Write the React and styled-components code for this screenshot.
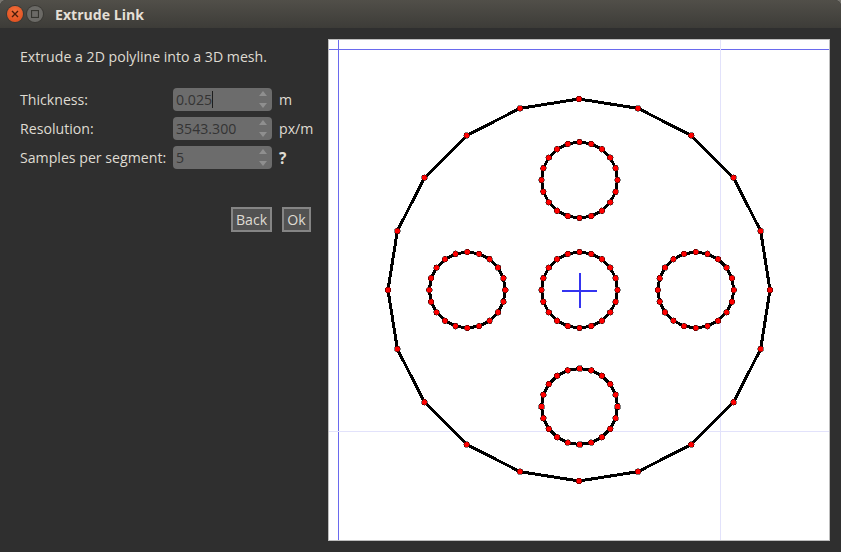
import React from "react";
import styled, { createGlobalStyle } from "styled-components";

const GlobalStyle = createGlobalStyle`
  html, body {
    margin: 0;
    padding: 0;
    background: #77756f;
  }
`;

const Window = styled.div`
  width: 841px;
  height: 552px;
  display: flex;
  flex-direction: column;
  overflow: hidden;
  border-radius: 6px 6px 0 0;
  background: #2f2f2f;
  font-family: "Open Sans", "Noto Sans", sans-serif;
  font-size: 14.15px;
  color: #dfdbd2;
`;

const TitleBar = styled.div`
  height: 28px;
  flex: none;
  display: flex;
  align-items: center;
  gap: 4px;
  padding-left: 7px;
  background: linear-gradient(#514f49, #3d3c38);
`;

const WinButton = styled.div`
  width: 16px;
  height: 16px;
  border-radius: 50%;
  display: flex;
  align-items: center;
  justify-content: center;
  background: ${(p) => (p.$close ? "radial-gradient(circle at 50% 35%, #f2703c, #dc4a1a)" : "#6b6a66")};
  box-shadow: 0 0 0 1px #3a3935;
`;

const Title = styled.div`
  margin-left: 8px;
  font-size: 14.1px;
  font-weight: 700;
  color: #e4dfd6;
`;

const Body = styled.div`
  flex: 1;
  display: flex;
  align-items: flex-start;
  padding-top: 11px;
`;

const Side = styled.div`
  width: 291px;
  margin-left: 20px;
  margin-right: 17px;
  flex: none;
`;

const Intro = styled.div`
  height: 38px;
  line-height: 36px;
  margin-bottom: 11px;
  white-space: nowrap;
`;

const Form = styled.div`
  display: grid;
  grid-template-columns: 153px 99px auto;
  grid-auto-rows: 23px;
  row-gap: 6px;
  align-items: center;
`;

const Label = styled.div`
  white-space: nowrap;
`;

const Spin = styled.div`
  height: 23px;
  border-radius: 4px;
  background: #6c6c6c;
  display: flex;
  align-items: center;
  justify-content: space-between;
  padding: 0 3px;
  color: #343434;
`;

const Value = styled.div`
  display: flex;
  align-items: center;
`;

const Caret = styled.span`
  width: 1px;
  height: 17px;
  background: #1e1e1e;
`;

const Unit = styled.div`
  margin-left: 7px;
  white-space: nowrap;
  font-weight: ${(p) => (p.$strong ? 700 : 400)};
  font-size: ${(p) => (p.$strong ? "15.5px" : "inherit")};
`;

const Actions = styled.div`
  display: flex;
  justify-content: flex-end;
  gap: 10px;
  margin-top: 38px;
`;

const Button = styled.button`
  height: 25px;
  padding: 0;
  width: ${(p) => p.$w}px;
  box-sizing: border-box;
  border: 2px solid #858585;
  border-radius: 0;
  background: #525252;
  color: #dfdbd2;
  font: inherit;
`;

const Canvas = styled.svg`
  width: 500px;
  height: 500px;
  flex: none;
  display: block;
  border: 1px solid #bdbdbd;
  background: #fff;
`;

const ring = (cx, cy, r) =>
  Array.from({ length: 20 }, (_, i) => {
    const a = (i * Math.PI) / 10;
    return [cx + r * Math.sin(a), cy - r * Math.cos(a)];
  });

const rings = [
  ring(579, 290, 191),
  ring(579.5, 180, 38),
  ring(579.5, 290, 38),
  ring(579.5, 406.5, 38),
  ring(467.3, 290, 38),
  ring(695.8, 290, 38),
];

const Arrows = () => (
  <svg width="12" height="19" viewBox="0 0 12 19">
    <path d="M6 1 L10 6 H2 Z" fill="#8f8f8f" />
    <path d="M2 13 H10 L6 18 Z" fill="#8f8f8f" />
  </svg>
);

const fields = [
  { label: "Thickness:", value: "0.025", unit: "m", caret: true },
  { label: "Resolution:", value: "3543.300", unit: "px/m" },
  { label: "Samples per segment:", value: "5", unit: "?", strong: true },
];

export default function App() {
  return (
    <>
      <GlobalStyle />
      <Window>
        <TitleBar>
          <WinButton $close>
            <svg width="8" height="8" viewBox="0 0 8 8">
              <path d="M1 1 L7 7 M7 1 L1 7" stroke="#4a1c0a" strokeWidth="1.4" />
            </svg>
          </WinButton>
          <WinButton>
            <svg width="8" height="8" viewBox="0 0 8 8">
              <rect x="0.5" y="0.5" width="7" height="7" fill="none" stroke="#35352f" strokeWidth="1.2" />
            </svg>
          </WinButton>
          <Title>Extrude Link</Title>
        </TitleBar>
        <Body>
          <Side>
            <Intro>Extrude a 2D polyline into a 3D mesh.</Intro>
            <Form>
              {fields.map((f) => (
                <React.Fragment key={f.label}>
                  <Label>{f.label}</Label>
                  <Spin>
                    <Value>
                      {f.value}
                      {f.caret && <Caret />}
                    </Value>
                    <Arrows />
                  </Spin>
                  <Unit $strong={f.strong}>{f.unit}</Unit>
                </React.Fragment>
              ))}
            </Form>
            <Actions>
              <Button $w={41}>Back</Button>
              <Button $w={29}>Ok</Button>
            </Actions>
          </Side>
          <Canvas viewBox="329 40 500 500" shapeRendering="crispEdges">
            <path d="M329 49.5 H829 M338.5 40 V540" stroke="#6a6aee" />
            <path d="M329 431.5 H829 M720.5 40 V540" stroke="#e2e2fb" />
            {rings.map((pts, i) => (
              <g key={i}>
                <polygon points={pts.map((p) => p.join(",")).join(" ")} fill="none" stroke="#000" strokeWidth="3" />
                {pts.map(([x, y], j) => (
                  <circle key={j} cx={x} cy={y} r="2.9" fill="#f00" stroke="#000" strokeWidth="0.5" />
                ))}
              </g>
            ))}
            <path d="M562 290.5 H597 M579.5 273 V308" stroke="#3434f0" strokeWidth="2" />
          </Canvas>
        </Body>
      </Window>
    </>
  );
}
